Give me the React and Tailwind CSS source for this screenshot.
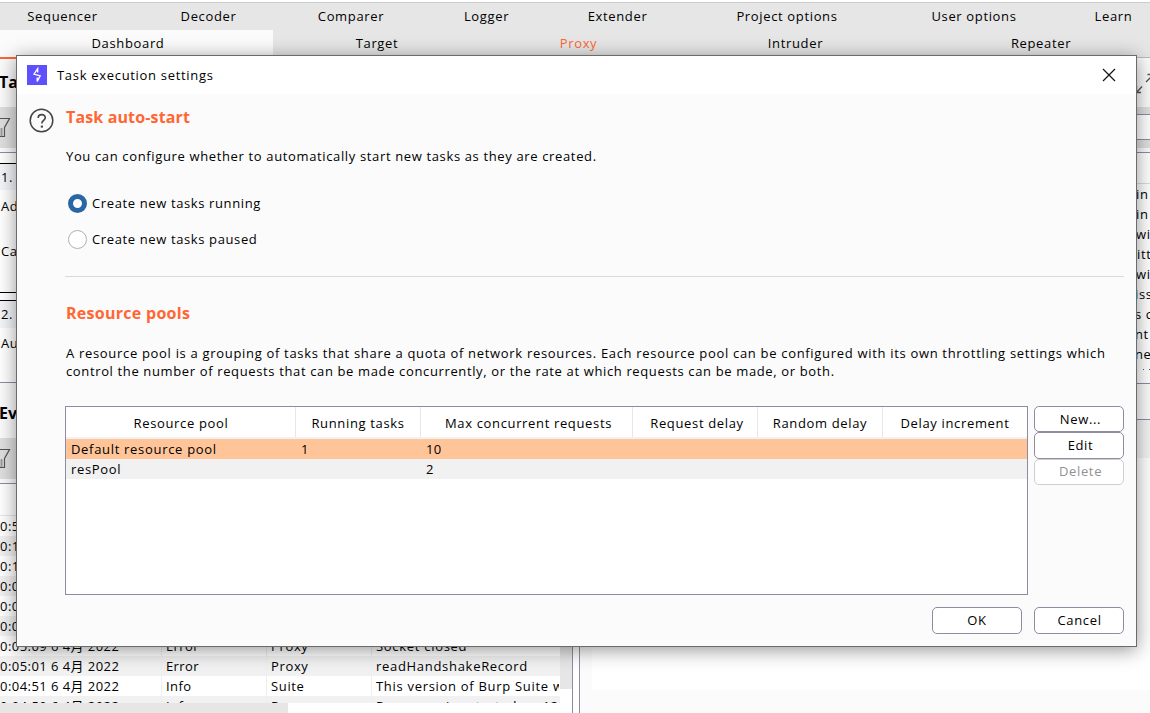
import { clsx } from "clsx";

const TOP_TABS = [
  ["Sequencer", "w-[125px]"],
  ["Decoder", "w-[167px]"],
  ["Comparer", "w-[118px]"],
  ["Logger", "w-[153px]"],
  ["Extender", "w-[109px]"],
  ["Project options", "w-[230px]"],
  ["User options", "w-[144px]"],
  ["Learn", "w-[135px]"],
];

const MAIN_TABS = [
  ["Dashboard", "w-[273px] bg-[#fbfbfb] pr-[17px]"],
  ["Target", "w-[208px]"],
  ["Proxy", "w-[195px] text-[#ff6633]"],
  ["Intruder", "w-[238px] pl-px"],
  ["Repeater", "w-[254px]"],
];

const EVENTS = [
  ["0:5", "", "", ""],
  ["0:1", "", "", ""],
  ["0:1", "", "", ""],
  ["0:0", "", "", ""],
  ["0:0", "", "", ""],
  ["0:0", "", "", ""],
  ["0:05:09 6 4月 2022", "Error", "Proxy", "Socket closed"],
  ["0:05:01 6 4月 2022", "Error", "Proxy", "readHandshakeRecord"],
  ["0:04:51 6 4月 2022", "Info", "Suite", "This version of Burp Suite w"],
  ["0:04:50 6 4月 2022", "Info", "Proxy", "Proxy service started on 127"],
];

const ISSUE_LINES = [
  ["in", "pl-[556px]"],
  ["in", "pl-[556px]"],
  ["wi", "pl-[556px]"],
  ["itt", "pl-[557px]"],
  ["wi", "pl-[556px]"],
  ["iss", "pl-[555px]"],
  ["s c", "pl-[555px]"],
  ["nt", "pl-[555px]"],
  ["ne", "pl-[555px]"],
];

const COLUMNS = [
  ["Resource pool", "w-[230px] pl-px"],
  ["Running tasks", "w-[125px]"],
  ["Max concurrent requests", "w-[212px] pl-1"],
  ["Request delay", "w-[125px] pl-1"],
  ["Random delay", "w-[125px]"],
  ["Delay increment", "w-[144px]"],
];

function Funnel() {
  return (
    <svg className="-ml-3 h-6 w-[24px] shrink-0" viewBox="0 0 24 24" fill="none">
      <path d="M1.5 2.5H21.5L16.5 11.5V20.5H9.5V11.5Z" stroke="#555" strokeWidth="1.2" />
      <path d="M13.5 12V20" stroke="#999" strokeWidth="2" />
    </svg>
  );
}

function TaskPanel() {
  return (
    <section className="flex h-[325px] flex-col bg-[#fbfbfb]">
      <h2 className="-ml-px flex h-[46px] items-center text-base font-bold tracking-normal">Ta</h2>
      <div className="mt-0.5 flex h-[41px] items-center bg-[#dfdfdf]"><Funnel /></div>
      <div className="mt-1 flex flex-1 flex-col border-y border-[#8e8ca1] bg-white">
        <div className="mt-[10px] flex h-[130px] flex-col border-y border-black">
          <div className="flex h-[26px] items-center bg-[#f3f5f9] pl-px pt-0.5">1.</div>
          <div className="mt-[6px] h-5 pl-px leading-5">Ad</div>
          <div className="mt-[25px] h-5 pl-px leading-5">Ca</div>
        </div>
        <div className="mt-[7px] flex-1 border-t border-black">
          <div className="flex h-[27px] items-center bg-[#f3f5f9] pl-px">2.</div>
          <div className="mt-[5px] h-5 pl-px leading-5">Au</div>
        </div>
      </div>
    </section>
  );
}

function EventLog() {
  return (
    <section className="flex flex-1 flex-col bg-[#fbfbfb]">
      <h2 className="-ml-px flex h-[55px] items-center pt-1 text-base font-bold tracking-normal">Ev</h2>
      <div className="flex h-[41px] items-center bg-[#dfdfdf]"><Funnel /></div>
      <div className="mt-1 flex h-[230px] flex-col overflow-hidden border-t border-[#8e8ca1] bg-white">
        <div className="h-8 shrink-0 border-b border-[#e6e6e6]" />
        <div className="flex h-[187px] shrink-0 overflow-hidden">
          <div className="w-[560px] overflow-hidden">
            {EVENTS.map(([time, type, source, message], i) => (
              <div key={i} className={clsx("flex h-5 items-center whitespace-nowrap", i % 2 ? "bg-[#f1f1f1]" : "bg-white")}>
                <span className="h-5 w-[162px] border-r border-[#eeeeee] leading-5 tracking-[0.45px]">{time}</span>
                <span className="h-5 w-[105px] border-r border-[#eeeeee] pl-1 leading-5 tracking-[0.4px]">{type}</span>
                <span className="h-5 w-[105px] border-r border-[#eeeeee] pl-1 leading-5">{source}</span>
                <span className="h-5 w-[187px] overflow-hidden pl-1 leading-5 tracking-[0.7px]">{message}</span>
              </div>
            ))}
          </div>
          <div className="h-[173px] w-3 bg-[#e6e6e6]" />
        </div>
        <div className="h-[10px] w-[288px] shrink-0 bg-[#e6e6e6]" />
      </div>
    </section>
  );
}

function IssuePanel() {
  return (
    <section className="flex min-w-0 flex-1 flex-col overflow-hidden border-l border-[#8e8ca1] bg-[#fbfbfb]">
      <div className="flex h-12 shrink-0 items-center pl-[555px]">
        <svg className="h-6 w-6 shrink-0" viewBox="0 0 24 24" fill="none" stroke="#555" strokeWidth="1.3">
          <path d="M1.5 15V21.5H6M1.5 21.5L7 15.5M11 11L18 4M12.5 3.5H18V9" />
        </svg>
      </div>
      <div className="h-[41px] shrink-0 bg-[#dfdfdf] pt-[7px]">
        <div className="h-[26px] border-y border-[#8e8ca1] bg-white" />
      </div>
      <div className="mt-1 flex h-[232px] shrink-0 flex-col border-y border-[#8e8ca1] bg-white">
        <div className="h-[31px] border-b border-[#dddddd]" />
        {ISSUE_LINES.map(([text, offset], i) => (
          <div key={i} className={clsx("h-5 whitespace-nowrap leading-5", offset)}>{text}</div>
        ))}
        <div className="flex h-[7px] items-end gap-[5px] pb-px pl-[563px]">
          <span className="h-px w-0.5 bg-[#555555]" />
          <span className="h-px w-0.5 bg-[#555555]" />
        </div>
      </div>
      <div className="mt-[35px] h-[39px] shrink-0 border-t border-[#8e8ca1] bg-[#f3f3f3]" />
      <div className="ml-3 h-[232px] shrink-0 bg-white" />
    </section>
  );
}

function DialogButton({ children, className = "h-[27px] pl-px", disabled }) {
  return (
    <button
      disabled={disabled}
      className={clsx(
        "flex w-[90px] items-center justify-center rounded-[5px] border bg-white tracking-[0.66px]",
        disabled ? "border-[#cfcfcf] text-[#929292]" : "border-[#8e8ca1]",
        className
      )}
    >
      {children}
    </button>
  );
}

function Radio({ checked, children }) {
  return (
    <label className="flex h-5 items-center gap-[5px] tracking-[0.62px]">
      <span
        className={clsx(
          "size-[19px] rounded-full bg-white",
          checked ? "border-[5px] border-[#2867a3]" : "border border-[#b0b0b0]"
        )}
      />
      <span className="pt-0.5">{children}</span>
    </label>
  );
}

function TaskDialog() {
  return (
    <div
      role="dialog"
      className="absolute left-4 top-[55px] flex h-[592px] w-[1121px] flex-col border border-[#6b6b6b] bg-[#fbfbfb] shadow-[0_3px_18px_rgba(0,0,0,0.42)]"
    >
      <header className="flex h-[38px] shrink-0 items-center bg-white pl-[10px] pr-5">
        <svg className="size-5" viewBox="0 0 20 20">
          <rect width="20" height="20" fill="#5f50ff" />
          <path d="M10.7 7.5V3.6L7 9.2L13.2 10.8L10.2 16.4V12.4" fill="none" stroke="#fff" strokeWidth="1.3" />
        </svg>
        <h1 className="ml-[10px] flex-1 pt-0.5 tracking-[0.69px]">Task execution settings</h1>
        <svg className="size-[14px]" viewBox="0 0 14 14" fill="none" stroke="#111" strokeWidth="1.2">
          <path d="M1 1L13 13M13 1L1 13" />
        </svg>
      </header>

      <div className="flex min-h-0 flex-1 flex-col pl-12 pr-3">
        <div className="-ml-9 flex h-[50px] items-start pt-[13px]">
          <svg className="mt-px size-[25px]" viewBox="0 0 25 25" fill="none" stroke="#444">
            <circle cx="12.5" cy="12.5" r="11.3" strokeWidth="1.5" />
            <path d="M9.2 9.9C9.2 5.6 16.3 5.6 16.3 9.6C16.3 12.4 12.8 12.4 12.8 15.6" strokeWidth="1.6" />
            <path d="M11.8 18.6H14" strokeWidth="2" />
          </svg>
          <h2 className="ml-3 h-5 text-base font-bold leading-5 tracking-[0.14px] text-[#ff6633]">Task auto-start</h2>
        </div>
        <p className="mt-[2px] h-5 pl-px leading-5 tracking-[0.64px]">
          You can configure whether to automatically start new tasks as they are created.
        </p>
        <div className="mt-[27px] flex flex-col gap-4 pl-[3px]">
          <Radio checked>Create new tasks running</Radio>
          <Radio>Create new tasks paused</Radio>
        </div>
        <hr className="mt-[27px] border-[#dadada]" />
        <h2 className="mt-[26px] h-5 pl-px text-base font-bold leading-5 tracking-[0.28px] text-[#ff6633]">Resource pools</h2>
        <p className="mt-[21px] whitespace-nowrap pl-px leading-[18px] tracking-[0.685px]">
          A resource pool is a grouping of tasks that share a quota of network resources. Each resource pool can be configured with its own throttling settings which
          <br />
          <span className="tracking-[0.635px]">
            control the number of requests that can be made concurrently, or the rate at which requests can be made, or both.
          </span>
        </p>
        <div className="mt-[26px] flex gap-[6px]">
          <div className="h-[189px] w-[963px] border border-[#8e8ca1] bg-white">
            <div className="flex h-8 border-b-2 border-[#f1f1f1]">
              {COLUMNS.map(([name, width]) => (
                <div key={name} className={clsx("flex items-center justify-center whitespace-nowrap border-r border-[#e8e8e8] pt-[3px] last:border-r-0", width)}>
                  {name}
                </div>
              ))}
            </div>
            <div className="flex h-5 bg-[#ffc599] pl-[5px] leading-5">
              <span className="w-[230px] tracking-[0.69px]">Default resource pool</span>
              <span className="w-[125px]">1</span>
              <span className="tracking-[0.4px]">10</span>
            </div>
            <div className="flex h-5 bg-[#f1f1f1] pl-[5px] leading-5">
              <span className="w-[355px]">resPool</span>
              <span>2</span>
            </div>
          </div>
          <div className="flex flex-col">
            <DialogButton className="h-[26px] pl-[3px] pt-px">New...</DialogButton>
            <DialogButton className="h-[27px] pl-[3px]">Edit</DialogButton>
            <DialogButton disabled className="h-[26px] pl-[3px]">Delete</DialogButton>
          </div>
        </div>
        <footer className="mt-3 flex justify-end gap-3">
          <DialogButton className="h-[27px]">OK</DialogButton>
          <DialogButton>Cancel</DialogButton>
        </footer>
      </div>
    </div>
  );
}

export default function App() {
  return (
    <div className="relative flex h-[713px] w-[1150px] flex-col overflow-hidden bg-[#fbfbfb] font-['Open_Sans','Noto_Sans_CJK_SC',sans-serif] text-[13px] tracking-[0.65px] text-black">
      <div className="h-[2px] shrink-0 bg-white" />
      <nav className="flex h-7 w-[1181px] shrink-0 border-t border-[#cccccc] bg-[#e6e6e6]">
        {TOP_TABS.map(([name, width]) => (
          <div key={name} className={clsx("flex items-center justify-center", width)}>{name}</div>
        ))}
      </nav>
      <nav className="flex h-[27px] w-[1168px] shrink-0 bg-[#e6e6e6]">
        {MAIN_TABS.map(([name, style]) => (
          <div key={name} className={clsx("flex items-center justify-center", style)}>{name}</div>
        ))}
      </nav>
      <div className="flex h-[2px] shrink-0">
        <div className="w-[273px] bg-[#ff6633]" />
        <div className="flex-1 border-t border-[#bbbbbb]" />
      </div>
      <main className="flex min-h-0 flex-1">
        <div className="flex w-[573px] flex-col overflow-hidden border-r border-[#8e8ca1]">
          <TaskPanel />
          <EventLog />
        </div>
        <div className="w-[6px] bg-white" />
        <IssuePanel />
      </main>
      <TaskDialog />
    </div>
  );
}
